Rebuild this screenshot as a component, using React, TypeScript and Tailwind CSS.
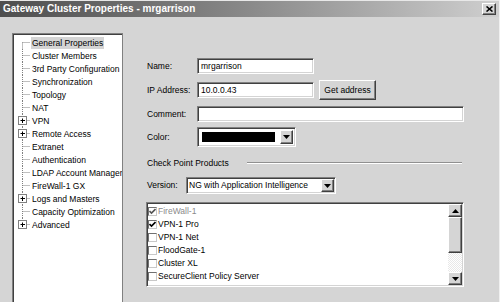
import React from "react";

interface TreeItem {
  label: string;
  expandable?: boolean;
  selected?: boolean;
}

const treeItems: TreeItem[] = [
  { label: "General Properties", selected: true },
  { label: "Cluster Members" },
  { label: "3rd Party Configuration" },
  { label: "Synchronization" },
  { label: "Topology" },
  { label: "NAT" },
  { label: "VPN", expandable: true },
  { label: "Remote Access", expandable: true },
  { label: "Extranet" },
  { label: "Authentication" },
  { label: "LDAP Account Management" },
  { label: "FireWall-1 GX" },
  { label: "Logs and Masters", expandable: true },
  { label: "Capacity Optimization" },
  { label: "Advanced", expandable: true },
];

const products = [
  { label: "FireWall-1", checked: true, disabled: true },
  { label: "VPN-1 Pro", checked: true },
  { label: "VPN-1 Net" },
  { label: "FloodGate-1" },
  { label: "Cluster XL" },
  { label: "SecureClient Policy Server" },
];

const sunken =
  "border border-t-[#808080] border-l-[#808080] border-r-white border-b-white shadow-[inset_1px_1px_0_#404040,inset_-1px_-1px_0_#d4d4d4]";
const raised =
  "border border-t-white border-l-white border-r-[#404040] border-b-[#404040] shadow-[inset_-1px_-1px_0_#808080] bg-[#d5d5d5]";

// tree connector lines + plus box
const TreeGutter: React.FC<{ first: boolean; last: boolean; plus?: boolean }> = ({
  first,
  last,
  plus,
}) => (
  <svg width="17" height="13" className="shrink-0">
    <line
      x1="8.5"
      x2="8.5"
      y1={first ? 6.5 : 0}
      y2={last ? 6.5 : 13}
      stroke="#808080"
      strokeDasharray="1 1"
    />
    <line x1="8.5" x2="16" y1="6.5" y2="6.5" stroke="#808080" strokeDasharray="1 1" />
    {plus && (
      <>
        <rect x="4.5" y="2.5" width="8" height="8" fill="white" stroke="#808080" />
        <line x1="6.5" x2="11" y1="6.5" y2="6.5" stroke="black" />
        <line x1="8.5" x2="8.5" y1="4.5" y2="9" stroke="black" />
      </>
    )}
  </svg>
);

const DropButton: React.FC<{ h: string }> = ({ h }) => (
  <div className={`${raised} w-[13px] ${h} flex items-center justify-center shrink-0`}>
    <svg width="7" height="4">
      <path d="M0 0h7L3.5 4z" fill="black" />
    </svg>
  </div>
);

const CheckBox: React.FC<{ checked?: boolean; disabled?: boolean }> = ({ checked, disabled }) => (
  <div className="w-[9px] h-[9px] bg-white border border-t-[#707070] border-l-[#707070] border-r-[#c8c8c8] border-b-[#c8c8c8] flex items-center justify-center shrink-0">
    {checked && (
      <svg width="7" height="7">
        <path d="M0.5 3l2 2 4-4" fill="none" stroke={disabled ? "#555" : "black"} strokeWidth="1.6" />
      </svg>
    )}
  </div>
);

const App: React.FC = () => {
  return (
    <div
      className="w-[500px] h-[302px] overflow-hidden bg-[#d5d5d5] flex flex-col border-r border-r-[#f0f0f0] text-[8.5px] text-black"
      style={{ fontFamily: '"Liberation Sans", Arial, sans-serif' }}
    >
      {/* title bar */}
      <div className="h-[17px] shrink-0 border-t border-t-[#e8e8e8] bg-gradient-to-r from-[#4e4e4e] via-[#8a8a8a] to-[#cfcfcf] flex items-center pl-[3px] pr-[3px]">
        <span className="text-white font-bold text-[10px] leading-none tracking-[0px]">
          Gateway Cluster Properties - mrgarrison
        </span>
        <div className={`${raised} ml-auto w-[14px] h-[12px] flex items-center justify-center`}>
          <svg width="7" height="6">
            <path d="M0.5 0.5l6 5M6.5 0.5l-6 5" stroke="black" strokeWidth="1.6" />
          </svg>
        </div>
      </div>

      <div className="flex flex-1 min-h-0">
        {/* tree */}
        <div className="ml-[12px] mt-[16px] w-[111px] h-[300px] shrink-0 bg-white border border-[#808080] shadow-[inset_1px_1px_0_#404040] pt-[2px] pl-[1px] overflow-hidden">
          {treeItems.map((item, i) => (
            <div key={item.label} className="flex items-center h-[13px]">
              <TreeGutter first={i === 0} last={i === treeItems.length - 1} plus={item.expandable} />
              <span
                className={`whitespace-nowrap leading-[12px] px-[1px] ${item.selected ? "bg-[#d4d4d4]" : ""}`}
              >
                {item.label}
              </span>
            </div>
          ))}
        </div>

        {/* form */}
        <div className="flex flex-col pl-[24px] pt-[41px]">
          <div className="flex items-center h-[16px]">
            <span className="w-[50px]">Name:</span>
            <div className={`${sunken} bg-white w-[117px] h-[16px] flex items-center pl-[3px]`}>mrgarrison</div>
          </div>

          <div className="flex items-center h-[20px] mt-[6px]">
            <span className="w-[50px]">IP Address:</span>
            <div className={`${sunken} bg-white w-[117px] h-[16px] flex items-center pl-[3px]`}>10.0.0.43</div>
            <div className={`${raised} ml-[5px] w-[57px] h-[20px] flex items-center justify-center`}>Get address</div>
          </div>

          <div className="flex items-center h-[16px] mt-[6px]">
            <span className="w-[50px]">Comment:</span>
            <div className={`${sunken} bg-white w-[267px] h-[16px]`} />
          </div>

          <div className="flex items-center h-[20px] mt-[5px]">
            <span className="w-[50px]">Color:</span>
            <div className={`${sunken} bg-white w-[99px] h-[20px] flex items-center p-[2px] gap-[3px]`}>
              <div className="flex-1 h-full bg-white p-[2px]">
                <div className="w-full h-full bg-black" />
              </div>
              <DropButton h="h-[14px]" />
            </div>
          </div>

          <div className="flex items-center h-[12px] mt-[10px]">
            <span className="w-[100px]">Check Point Products</span>
            <div className="w-[215px] h-[2px] border-t border-t-[#909090] border-b border-b-white" />
          </div>

          <div className="flex items-center h-[17px] mt-[8px]">
            <span className="w-[39px]">Version:</span>
            <div className={`${sunken} bg-white w-[150px] h-[17px] flex items-center pl-[2px] pr-[1px]`}>
              <span className="flex-1 whitespace-nowrap">NG with Application Intelligence</span>
              <DropButton h="h-[13px]" />
            </div>
          </div>

          <div className={`${sunken} bg-white w-[318px] h-[85px] mt-[8px] ml-[-1px] flex p-[1px]`}>
            <div className="flex-1 pt-[1px]">
              {products.map((p) => (
                <div key={p.label} className="flex items-center h-[13px] gap-[1px]">
                  <CheckBox checked={p.checked} disabled={p.disabled} />
                  <span className={`whitespace-nowrap ${p.disabled ? "text-[#8a8a8a]" : ""}`}>{p.label}</span>
                </div>
              ))}
            </div>
            <div className="w-[14px] flex flex-col">
              <div className={`${raised} h-[13px] flex items-center justify-center shrink-0`}>
                <svg width="7" height="4">
                  <path d="M3.5 0L7 4H0z" fill="black" />
                </svg>
              </div>
              <div className={`${raised} h-[36px] shrink-0`} />
              <div className="flex-1 bg-[repeating-conic-gradient(#e8e8e8_0_25%,#ffffff_0_50%)] bg-[length:2px_2px]" />
              <div className={`${raised} h-[13px] flex items-center justify-center shrink-0`}>
                <svg width="7" height="4">
                  <path d="M0 0h7L3.5 4z" fill="black" />
                </svg>
              </div>
            </div>
          </div>
        </div>
      </div>
    </div>
  );
};

export default App;
